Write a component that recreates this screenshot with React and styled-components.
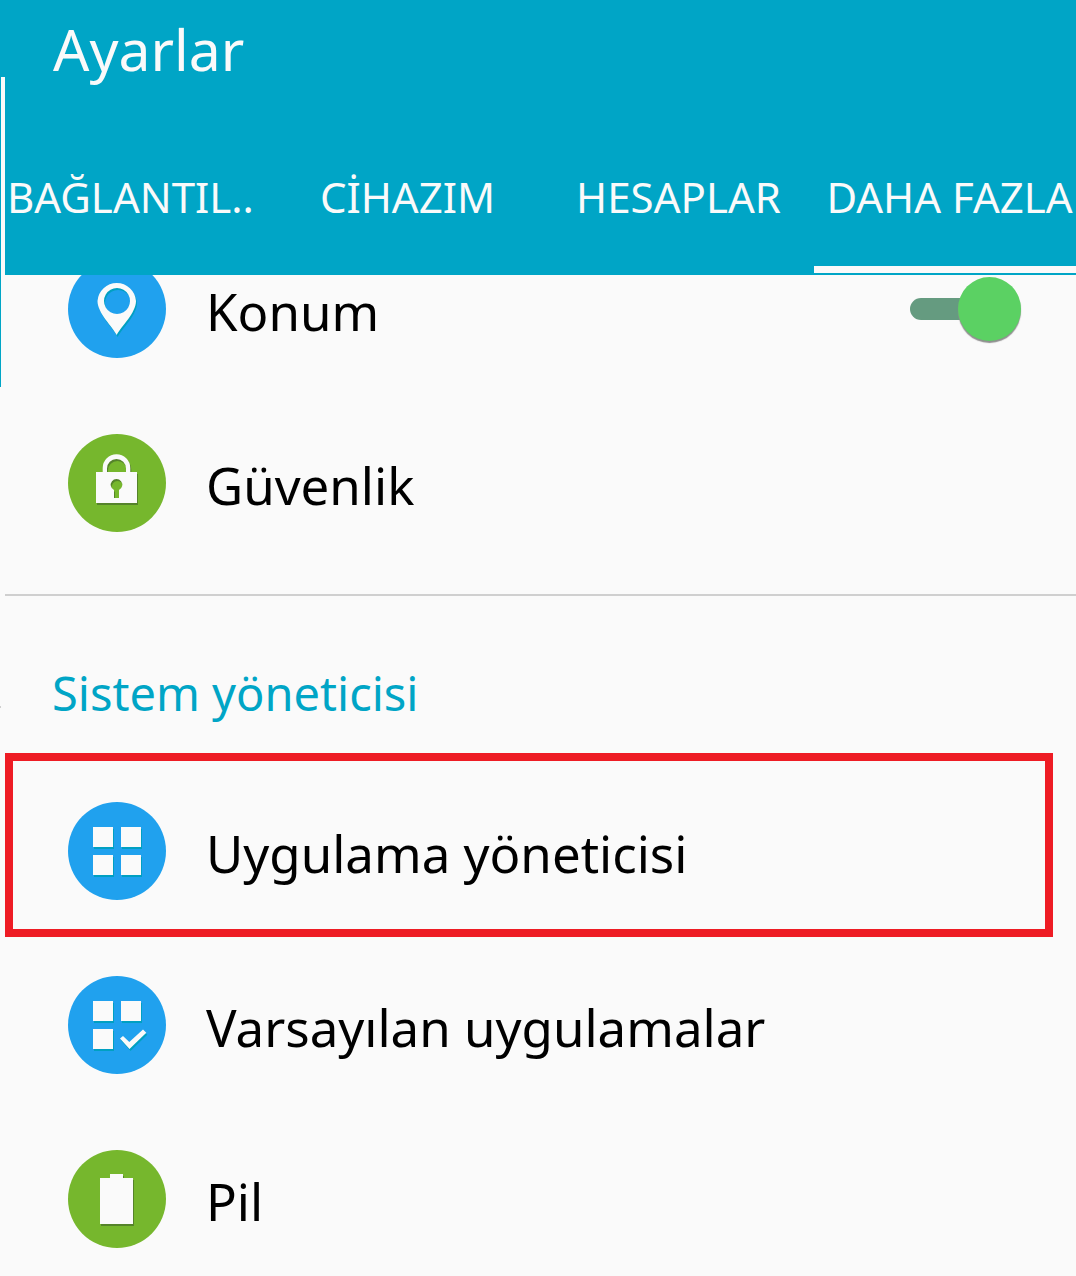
import React, { useState } from "react";
import styled, { createGlobalStyle } from "styled-components";

const GlobalStyle = createGlobalStyle`
  * {
    box-sizing: border-box;
  }

  body {
    margin: 0;
    background-color: #fafafa;
    font-family: "Noto Sans", "Open Sans", sans-serif;
    color: #000;
  }
`;

const Screen = styled.div`
  display: flex;
  flex-direction: column;
  height: 100vh;
  overflow: hidden;
`;

const TitleBar = styled.header`
  position: relative;
  z-index: 2;
  height: 77px;
  padding: 9px 53px 0;
  background-color: #00a5c6;
`;

const Title = styled.h1`
  margin: 0;
  font-size: 57px;
  font-weight: 400;
  line-height: 80px;
  color: #fafafa;
`;

const Body = styled.div`
  display: flex;
  flex: 1;
  min-height: 0;
`;

const Edge = styled.div`
  display: flex;
  flex-direction: column;
  justify-content: flex-start;
  gap: 319px;
  width: 5px;
  flex-shrink: 0;
`;

const EdgeMark = styled.span`
  width: 1px;
  height: ${(props) => props.$length}px;
  background-color: ${(props) => props.$color};
`;

const Main = styled.main`
  flex: 1;
  min-width: 0;
  display: flex;
  flex-direction: column;
  overflow: hidden;
`;

const Tabs = styled.nav`
  display: grid;
  grid-template-columns: 267fr 271fr 271fr 271fr;
  flex-shrink: 0;
  height: 198px;
  margin-right: -9px;
  padding-bottom: 2px;
  background-color: #00a5c6;
  position: relative;
  z-index: 1;
`;

const Tab = styled.button`
  display: flex;
  align-items: center;
  justify-content: ${(props) => (props.$start ? "flex-start" : "center")};
  min-width: 0;
  padding: 51px 0 0 ${(props) => (props.$start ? "2px" : "0")};
  border: none;
  border-bottom: 7px solid
    ${(props) => (props.$active ? "#fafafa" : "transparent")};
  background: none;
  color: #fafafa;
  font-family: inherit;
  font-size: 42px;
  line-height: 56px;
  white-space: nowrap;
  cursor: pointer;
`;

const List = styled.ul`
  list-style: none;
  margin: 0;
  padding: 0;
  margin-top: ${(props) => (props.$scrolled ? "-53px" : "0")};
`;

const Row = styled.li`
  position: relative;
  display: flex;
  align-items: center;
  gap: 40px;
  height: 174px;
  padding: 0 55px 0 63px;
`;

// red frame lying over the row that the user has to tap
const Highlight = styled.span`
  position: absolute;
  top: -11px;
  bottom: 1px;
  left: 0;
  right: 23px;
  border: 8px solid #ee1c24;
  pointer-events: none;
`;

const RowLabel = styled.label`
  flex: 1;
  font-size: 51px;
  line-height: 72px;
  padding-top: 4px;
`;

const IconSvg = styled.svg`
  flex-shrink: 0;
  width: 98px;
  height: 98px;
`;

const Divider = styled.hr`
  flex-shrink: 0;
  width: 100%;
  height: 2px;
  margin: 24px 0 0;
  border: none;
  background-color: #cfcfcf;
`;

const SectionTitle = styled.h2`
  flex-shrink: 0;
  height: 168px;
  margin: 0;
  padding: 65px 47px 0;
  font-size: 47px;
  font-weight: 400;
  line-height: 64px;
  color: #00a5c6;
`;

const Switch = styled.input`
  appearance: none;
  display: flex;
  align-items: center;
  justify-content: ${(props) => (props.checked ? "flex-end" : "flex-start")};
  width: 111px;
  height: 22px;
  margin: 0;
  border-radius: 11px;
  background: linear-gradient(#659b80, #659b80) left / 80px 22px no-repeat;
  cursor: pointer;

  &::before {
    content: "";
    flex-shrink: 0;
    width: 63px;
    height: 64px;
    border-radius: 50%;
    background-color: #5bd163;
    box-shadow: 0 2px 1px #8f8f8f;
  }
`;

const BLUE = "#20a1ee";
const BLUE_SHADE = "#00a0c2";
const GREEN = "#76b72d";
const GREEN_SHADE = "#55832a";

function RoundIcon({ color, shade, d }) {
  return (
    <IconSvg viewBox="0 0 98 98" aria-hidden="true">
      <circle cx="49" cy="49" r="49" fill={color} />
      <path d={d} fill={shade} fillRule="evenodd" transform="translate(1 2)" />
      <path d={d} fill="#fafafa" fillRule="evenodd" />
    </IconSvg>
  );
}

const icons = {
  location: {
    color: BLUE,
    shade: BLUE_SHADE,
    d: "M48.7 75 C44 66 29.5 53 29.5 41 A19.3 19.3 0 0 1 68 41 C68 53 53.5 66 48.7 75 Z M49 28 a13 13 0 1 0 0.01 0 Z",
  },
  lock: {
    color: GREEN,
    shade: GREEN_SHADE,
    d: "M28 38 H34.7 V34 A13.8 13.8 0 0 1 62.3 34 V38 H69 V69 H28 Z M39 38 H58 V34.5 A9.5 9.5 0 0 0 39 34.5 Z M46 56 V64 H51 V56 A5.8 5.8 0 1 0 46 56 Z",
  },
  apps: {
    color: BLUE,
    shade: BLUE_SHADE,
    d: "M25 25 H45 V45 H25 Z M53 25 H73 V45 H53 Z M25 53 H45 V73 H25 Z M53 53 H73 V73 H53 Z",
  },
  defaults: {
    color: BLUE,
    shade: BLUE_SHADE,
    d: "M25 25 H45 V45 H25 Z M53 25 H73 V45 H53 Z M25 53 H45 V73 H25 Z M52 62.5 L55 60 L61.3 66 L75 53.5 L78.3 56.8 L61.5 73 Z",
  },
  battery: {
    color: GREEN,
    shade: GREEN_SHADE,
    d: "M32 28 H42 V24 H55 V28 H65 V74 H32 Z",
  },
};

const tabs = ["BAĞLANTIL..", "CİHAZIM", "HESAPLAR", "DAHA FAZLA"];

function App() {
  const [activeTab, setActiveTab] = useState("DAHA FAZLA");
  const [locationOn, setLocationOn] = useState(true);

  return (
    <Screen>
      <GlobalStyle />
      <TitleBar>
        <Title>Ayarlar</Title>
      </TitleBar>
      <Body>
        <Edge>
          <EdgeMark $length={310} $color="#00a5c6" />
          <EdgeMark $length={2} $color="#cfcfcf" />
        </Edge>
        <Main>
          <Tabs>
            {tabs.map((tab, index) => (
              <Tab
                key={tab}
                $active={tab === activeTab}
                $start={index === 0}
                onClick={() => setActiveTab(tab)}
              >
                {tab}
              </Tab>
            ))}
          </Tabs>
          <List $scrolled>
            <Row>
              <RoundIcon {...icons.location} />
              <RowLabel htmlFor="location">Konum</RowLabel>
              <Switch
                id="location"
                type="checkbox"
                role="switch"
                checked={locationOn}
                onChange={() => setLocationOn(!locationOn)}
              />
            </Row>
            <Row>
              <RoundIcon {...icons.lock} />
              <RowLabel as="span">Güvenlik</RowLabel>
            </Row>
          </List>
          <Divider />
          <SectionTitle>Sistem yöneticisi</SectionTitle>
          <List>
            <Row>
              <RoundIcon {...icons.apps} />
              <RowLabel as="span">Uygulama yöneticisi</RowLabel>
              <Highlight />
            </Row>
            <Row>
              <RoundIcon {...icons.defaults} />
              <RowLabel as="span">Varsayılan uygulamalar</RowLabel>
            </Row>
            <Row>
              <RoundIcon {...icons.battery} />
              <RowLabel as="span">Pil</RowLabel>
            </Row>
          </List>
        </Main>
      </Body>
    </Screen>
  );
}

export default App;
